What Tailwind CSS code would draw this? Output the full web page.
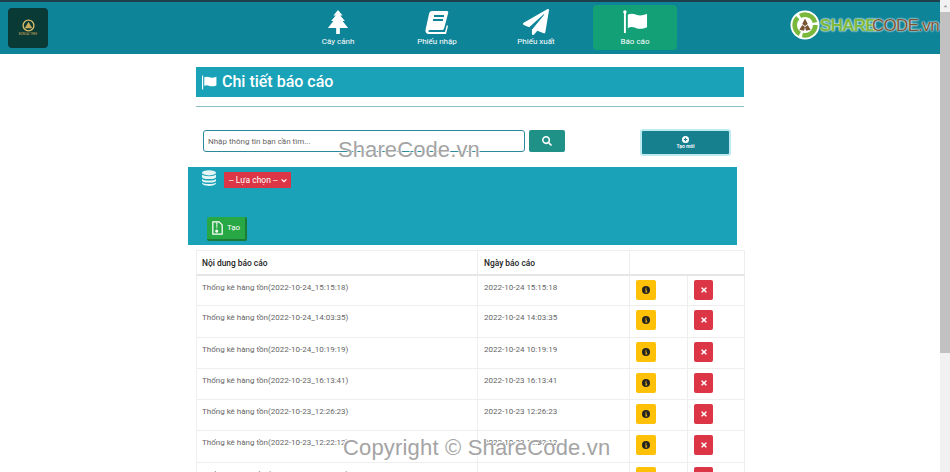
<!DOCTYPE html>
<html lang="vi">
<head>
  <meta charset="UTF-8">
  <title>Chi tiết báo cáo</title>
  <script src="https://cdn.jsdelivr.net/npm/@tailwindcss/browser@4"></script>
</head>
<body class="bg-white font-['Roboto',sans-serif] overflow-hidden">
  <div class="flex h-[472px] w-[950px] overflow-hidden relative">
    <div class="w-[940px] shrink-0">
      <!-- thanh menu -->
      <header class="h-[54px] bg-[#0e8498] border-t-2 border-[#1f3f4c] flex items-start text-white relative">
        <div class="ml-[8px] mt-[6px] w-[40px] h-[40px] rounded bg-[#0a3a36] flex flex-col items-center justify-center">
          <svg viewBox="0 0 24 24" class="w-[13px] h-[13px]">
            <circle cx="12" cy="12" r="10" fill="none" stroke="#d6bb6a" stroke-width="2.5"/>
            <path d="M12 5l7 12H5z" fill="#c9a95a"/>
          </svg>
          <span class="text-[3px] leading-[5px] text-[#c9a95a]">BONSAI TREE</span>
        </div>
        <nav class="flex ml-[248px] mt-[3px] gap-[15px]">
          <a class="w-[84px] h-[45px] flex flex-col items-center rounded">
            <svg viewBox="0 0 24 26" class="w-[22px] h-[26px] mt-[4px] fill-white">
              <path d="M12 0l5 6h-2.500l5 6H17l6 7.500h-9V26h-4v-6.500H1L7 12H4.500l5-6H7z"/>
            </svg>
            <span class="text-[8px] leading-[12px] mt-[1px]">Cây cảnh</span>
          </a>
          <a class="w-[84px] h-[45px] flex flex-col items-center rounded">
            <svg viewBox="0 0 24 24" class="w-[24px] h-[24px] mt-[5px]">
              <path d="M7 1h15c1 0 1.500 1 1.200 2l-4 15c-.4 1.500-1.200 2-2.700 2H5c-1.500 0-2 .8-1.800 1.300.2.600.9.700 1.800.7h15l1.800-7 1.200 1-2 8H4C1.500 24 0 22 .6 19.500L4 4c.4-1.800 1.500-3 3-3z" fill="#fff"/>
              <path d="M9 6h10M8 10h10" stroke="#0e8498" stroke-width="2"/>
            </svg>
            <span class="text-[8px] leading-[12px] mt-[2px]">Phiếu nhập</span>
          </a>
          <a class="w-[84px] h-[45px] flex flex-col items-center rounded">
            <svg viewBox="0 0 512 512" class="w-[26px] h-[26px] mt-[4px] fill-white">
              <path d="M476 3.200L12.500 270.600c-18.100 10.400-15.800 35.600 2.200 43.200L121 358.400l287.300-253.200c5.500-4.900 13.300 2.600 8.600 8.300L176 407v80.500c0 23.600 28.500 32.900 42.500 15.800L282 426l124.600 52.200c14.200 6 30.400-2.900 33-18.200l72-432C515 7.800 493.300-6.800 476 3.200z"/>
            </svg>
            <span class="text-[8px] leading-[12px] mt-[1px]">Phiếu xuất</span>
          </a>
          <a class="w-[84px] h-[45px] flex flex-col items-center rounded bg-[#13a077]">
            <svg viewBox="0 0 26 26" class="w-[25px] h-[25px] mt-[4px] fill-white">
              <circle cx="2" cy="3" r="1.800"/>
              <rect x="1" y="3" width="2" height="22"/>
              <path d="M5 6c3-2 6-1 9 0s6 1 11-1v14c-5 2-8 2-11 1s-6-2-9 0z"/>
            </svg>
            <span class="text-[8px] leading-[12px] mt-[2px]">Báo cáo</span>
          </a>
        </nav>
        <!-- logo sharecode -->
        <div class="absolute left-[790px] top-[8px] flex items-center">
          <svg viewBox="0 0 32 32" class="w-[30px] h-[30px]">
            <circle cx="16" cy="16" r="15.500" fill="#fff"/>
            <circle cx="16" cy="16" r="11" fill="none" stroke="#7ab83c" stroke-width="5" stroke-dasharray="20 3"/>
            <path d="M16 9l3 6-3 2-3-2zM10 21l3-5 3 2-1 4zM22 21l-3-5-3 2 1 4z" fill="#7a5433"/>
          </svg>
          <span class="font-['Liberation_Sans',sans-serif] text-[17px] leading-none tracking-[-0.7px] whitespace-nowrap [text-shadow:0_0_2px_#fff,0_0_2px_#fff]">
            <b class="text-[#7ab83c]">SHARE</b><span class="text-[#7a5433] -ml-[4px]">CODE.vn</span>
          </span>
        </div>
      </header>

      <main class="ml-[196px] w-[548px]">
        <div class="mt-[13px] h-[30px] bg-[#19a2b8] flex items-center pl-[6px] gap-[5px] text-white">
          <svg viewBox="0 0 26 26" class="w-[15px] h-[15px] fill-white">
            <rect x="0" y="1" width="2" height="24"/>
            <path d="M4 4c3-2 6-1 9 0s7 1 12-1v15c-5 2-9 2-12 1s-6-2-9 0z"/>
          </svg>
          <h1 class="text-[16px] font-medium leading-none">Chi tiết báo cáo</h1>
        </div>
        <hr class="mt-[9px] border-[#8fc0c9]">

        <div class="flex items-start mt-[23px] ml-[7px]">
          <input placeholder="Nhập thông tin bạn cần tìm..." class="w-[322px] h-[22px] border-[1.500px] border-[#2a8a9c] rounded-[3px] px-[4px] text-[8px] placeholder:text-[#666]">
          <button class="ml-[4px] w-[36px] h-[22px] rounded-[2px] bg-[#1f9187] flex items-center justify-center">
            <svg viewBox="0 0 512 512" class="w-[10px] h-[10px] fill-white">
              <path d="M505 442.700L405.300 343c-4.500-4.500-10.600-7-17-7H372c27.600-35.300 44-79.700 44-128C416 93.100 322.900 0 208 0S0 93.100 0 208s93.100 208 208 208c48.300 0 92.700-16.400 128-44v16.300c0 6.400 2.500 12.500 7 17l99.700 99.700c9.400 9.400 24.600 9.400 33.900 0l28.300-28.300c9.400-9.400 9.400-24.600.1-34zM208 336c-70.700 0-128-57.200-128-128 0-70.700 57.200-128 128-128 70.700 0 128 57.200 128 128 0 70.700-57.200 128-128 128z"/>
            </svg>
          </button>
          <button class="ml-[75px] -mt-[1px] w-[91px] h-[27px] rounded-[3px] bg-[#17808f] border-2 border-[#bdeaf0] flex flex-col items-center justify-center text-white">
            <svg viewBox="0 0 16 16" class="w-[7px] h-[7px]">
              <circle cx="8" cy="8" r="8" fill="#fff"/>
              <path d="M8 4v8M4 8h8" stroke="#17808f" stroke-width="2.500"/>
            </svg>
            <span class="text-[5px] leading-[7px] font-semibold">Tạo mới</span>
          </button>
        </div>

        <section class="-ml-[8px] mt-[11px] w-[549px] h-[78px] bg-[#19a2b8] relative">
          <div class="flex items-start pl-[14px] pt-[3px]">
            <svg viewBox="0 0 16 18" class="w-[14px] h-[16px] fill-[#e6f6f5]">
              <ellipse cx="8" cy="3" rx="8" ry="3"/>
              <path d="M0 5c2 2.500 14 2.500 16 0v3c-1 3-15 3-16 0zM0 10c2 2.500 14 2.500 16 0v2c-1 3-15 3-16 0zM0 14c2 2.500 14 2.500 16 0v1c-1 4-15 4-16 0z"/>
            </svg>
            <div class="ml-[8px] mt-[2px] w-[67px] h-[16px] bg-[#dc3545] rounded-[1px] flex items-center justify-between pl-[5px] pr-[4px] text-white text-[8.500px]">
              <span>-- Lựa chọn --</span>
              <svg viewBox="0 0 10 6" class="w-[6px] h-[5px]"><path d="M1 1l4 4 4-4" fill="none" stroke="#fff" stroke-width="2"/></svg>
            </div>
          </div>
          <button class="mt-[29px] ml-[19px] w-[40px] h-[24px] rounded-[2px] bg-[#28a745] border-r-2 border-b-2 border-[#1b7d34] flex items-center justify-center gap-[4px] text-white text-[8px]">
            <svg viewBox="0 0 14 18" class="w-[11px] h-[14px]">
              <path d="M1 1h8l4 4v12H1z" fill="none" stroke="#fff" stroke-width="1.600"/>
              <path d="M6 2v8" stroke="#fff" stroke-width="2" stroke-dasharray="1.500 1"/>
              <circle cx="6" cy="13" r="2" fill="#fff"/>
            </svg>
            Tạo
          </button>
        </section>

        <table class="mt-[5px] w-[548px] table-fixed border-collapse text-[8px] text-[#666]" id="reportTable">
          <thead>
            <tr class="h-[24px] border-b-2 border-[#e6e6e6] text-[#222]">
              <th class="w-[281px] border border-[#eee] border-b-[#e6e6e6] text-left text-[8.400px] font-medium px-[5px] pt-[2px]">Nội dung báo cáo</th>
              <th class="w-[152px] border border-[#eee] border-b-[#e6e6e6] text-left text-[8.400px] font-medium px-[6px] pt-[2px]">Ngày báo cáo</th>
              <th class="w-[58px] border-y border-l border-[#eee] border-b-[#e6e6e6]"></th>
              <th class="w-[57px] border-y border-r border-[#eee] border-b-[#e6e6e6]"></th>
            </tr>
          </thead>
          <tbody></tbody>
        </table>
      </main>
    </div>

    <!-- thanh cuộn -->
    <div class="w-[10px] h-full bg-[#f1f1f1] flex flex-col items-center">
      <svg viewBox="0 0 8 6" class="w-[5px] h-[4px] mt-[4px]"><path d="M4 1l3 4H1z" fill="#a3a3a3"/></svg>
      <div class="w-full h-[341px] bg-[#c1c1c1] mt-[4px]"></div>
    </div>

    <!-- watermark -->
    <div class="absolute left-[338px] top-[136px] font-['Liberation_Sans',sans-serif] text-[22px] leading-[28px] tracking-[0.1px] text-[#a4a4a4] [text-shadow:1px_1px_0_#fff,-1px_-1px_0_#fff]">ShareCode.vn</div>
    <div class="absolute left-[343px] top-[434px] font-['Liberation_Sans',sans-serif] text-[22px] leading-[28px] tracking-[0.17px] text-[#a4a4a4] [text-shadow:1px_1px_0_#fff,-1px_-1px_0_#fff]">Copyright © ShareCode.vn</div>
  </div>

  <script>
    const rows = [
      ["2022-10-24", "15:15:18"],
      ["2022-10-24", "14:03:35"],
      ["2022-10-24", "10:19:19"],
      ["2022-10-23", "16:13:41"],
      ["2022-10-23", "12:26:23"],
      ["2022-10-23", "12:22:12"],
      ["2022-10-23", "12:20:45"]
    ];
    const tbody = document.querySelector("#reportTable tbody");
    rows.forEach(r => {
      const tr = document.createElement("tr");
      tr.className = "h-[31.300px] align-top";
      tr.innerHTML = `
        <td class="border border-[#eee] px-[5px] pt-[6px]">Thống kê hàng tồn(${r[0]}_${r[1]})</td>
        <td class="border border-[#eee] px-[6px] pt-[6px]">${r[0]} ${r[1]}</td>
        <td class="border border-[#eee] pl-[6px] pt-[4px]">
          <div class="w-[20px] h-[20px] rounded-[2px] bg-[#ffc107] flex items-center justify-center">
            <svg viewBox="0 0 16 16" class="w-[8px] h-[8px]">
              <circle cx="8" cy="8" r="8" fill="#222"/>
              <path d="M8 3.500v2M6.500 7.500H8.500V12M6.500 12h4" stroke="#ffc107" stroke-width="1.800" fill="none"/>
            </svg>
          </div>
        </td>
        <td class="border border-[#eee] pl-[6px] pt-[4px]">
          <div class="w-[19px] h-[20px] rounded-[2px] bg-[#dc3545] flex items-center justify-center">
            <svg viewBox="0 0 352 512" class="w-[6px] h-[8px] fill-white">
              <path d="M242.720 256l100.070-100.070c12.280-12.280 12.280-32.190 0-44.480l-22.240-22.240c-12.280-12.280-32.190-12.280-44.480 0L176 189.280 75.930 89.210c-12.280-12.280-32.190-12.280-44.480 0L9.210 111.450c-12.280 12.280-12.280 32.190 0 44.480L109.280 256 9.210 356.070c-12.280 12.280-12.280 32.190 0 44.480l22.240 22.240c12.280 12.280 32.200 12.280 44.480 0L176 322.720l100.070 100.070c12.280 12.280 32.200 12.280 44.480 0l22.240-22.240c12.280-12.280 12.280-32.190 0-44.480L242.720 256z"/>
            </svg>
          </div>
        </td>
      `;
      tbody.appendChild(tr);
    });
  </script>
</body>
</html>
